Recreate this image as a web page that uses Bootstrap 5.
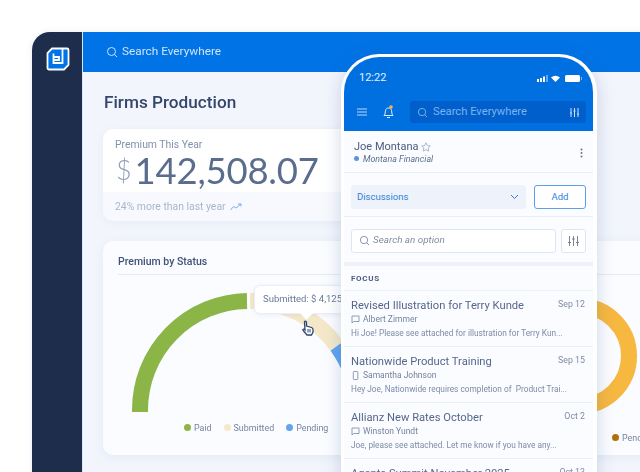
<!DOCTYPE html>
<html lang="en">
<head>
<meta charset="utf-8">
<title>Firms Production</title>
<link href="https://cdn.jsdelivr.net/npm/bootstrap@5.3.0/dist/css/bootstrap.min.css" rel="stylesheet">
<style>
html,body{height:100%;}
body{background:#fff;font-family:Roboto,"Noto Sans",sans-serif;overflow:hidden;color:#3d4f70;}
.stage{position:relative;width:640px;height:472px;overflow:hidden;padding:32px 0 0 32px;filter:blur(.3px);}
.desk{width:640px;height:460px;border-top-left-radius:18px;overflow:hidden;box-shadow:0 0 6px rgba(60,90,150,.10);background:#f2f5fc;}
.rail{width:51px;background:#1e2d4b;padding:14px 0 0 14px;border-right:1px solid #dfe6f3;}
.mainarea{width:557px;}
.topbar{height:40px;background:#0073e6;color:#cfe3fb;padding-left:23px;font-size:11.8px;gap:4px;}
.pagebody{padding:18px 20px 0 21px;}
.pagetitle{font-size:17.2px;font-weight:500;color:#33466b;line-height:24px;margin:0 0 15px;}
.kpi{width:300px;height:92px;margin-left:-1px;background:#fff;border-radius:10px;box-shadow:0 2px 8px rgba(70,100,160,.06);overflow:hidden;}
.kpihead{height:63px;padding:9px 12px 0;}
.kpilabel{font-size:10.4px;line-height:13px;color:#8291ac;}
.kpinum{color:#5a6d8d;font-size:36.5px;line-height:38px;letter-spacing:-.2px;font-family:Lato,"Noto Sans",sans-serif;}
.kpicur{color:#8f9db6;font-size:27px;margin:0 3px 0 1px;vertical-align:4px;font-weight:300;}
.kpifoot{height:29px;background:#f8f9fe;color:#a9b5cb;font-size:10.4px;padding:0 12px;gap:4px;}
.panel{position:relative;width:560px;height:214px;margin-top:20px;margin-left:-1px;background:#fbfcff;border-radius:10px;box-shadow:0 2px 10px rgba(70,100,160,.08);padding:14px 15px;}
.paneltitle{font-size:10.5px;font-weight:500;color:#3f5277;line-height:14px;padding-bottom:5px;border-bottom:1px solid #e6ebf5;}
.gauge{position:absolute;left:0;top:0;}
.legendrow{position:absolute;left:81px;top:181px;font-size:8.9px;color:#75859f;gap:12px;}
.legendfar{position:absolute;left:509px;top:191px;font-size:8.9px;color:#75859f;}
.swatch{display:inline-block;width:7px;height:7px;border-radius:50%;margin-right:3px;}
.tipbox{position:absolute;left:151px;top:44px;height:29px;width:110px;background:#fff;border:1px solid #e9eef7;border-radius:6px;font-size:9.5px;color:#67799a;padding-left:8px;white-space:nowrap;overflow:visible;box-shadow:0 1px 4px rgba(70,100,160,.1);}
.tipbox::after{content:"";position:absolute;left:47px;bottom:-5px;width:9px;height:9px;background:#fff;transform:rotate(45deg);}
.handicon{position:absolute;left:198px;top:79px;}
.phone{position:absolute;left:341px;top:54px;width:256px;height:440px;border:3px solid #fff;border-right-width:4px;border-radius:38px 38px 0 0;background:#fbfcff;overflow:hidden;box-shadow:0 4px 18px rgba(50,80,140,.22);}
.phonehead{height:74px;background:#0070e0;color:#e3effd;padding:0 7px 0 13px;}
.statusline{height:44px;padding:13px 0 0 2px;font-size:11px;margin-right:3px;}
.searchpill{flex:1;height:22px;background:#005fca;border-radius:3px;margin-left:16px;padding:0 7px;color:#7db3f0;font-size:11.2px;gap:5px;}
.contact{height:42px;padding:9px 10px 0;border-bottom:1px solid #e9eef7;}
.contactname{font-size:11px;line-height:14px;color:#4a5c7c;}
.contactsub{font-size:8.8px;line-height:11px;font-style:italic;color:#5d6e8d;}
.bluedot{display:inline-block;width:5px;height:5px;background:#5f93d8;border-radius:50%;margin-right:4px;vertical-align:1px;}
.pickrow{height:44px;padding:5px 7px 0;border-bottom:1px solid #e9eef7;gap:8px;}
.picker{flex:1;height:24px;background:#eef2fa;border-radius:3px;color:#2f7fdc;font-size:9.5px;padding:0 7px 0 6px;}
.addbtn{width:52px;height:24px;padding:0;font-size:9.5px;color:#2f7fdc;border:1px solid #5d9fe8;background:#fff;border-radius:3px;}
.searchrow{height:49px;padding:2px 7px 0;gap:5px;border-bottom:4px solid #eef2f8;}
.optbox{flex:1;height:24px;border:1px solid #dfe6f2;border-radius:3px;background:#fff;color:#7f8ca5;font-size:9.9px;font-style:italic;padding:0 7px;gap:3px;}
.slidebtn{width:25px;height:24px;border:1px solid #dfe6f2;border-radius:3px;background:#fff;}
.focushead{height:25px;padding:2px 7px 0;font-size:8px;font-weight:700;letter-spacing:.7px;color:#4a5c7c;border-bottom:1px solid #edf1f8;}
.msg{height:56px;padding:8px 8px 0 7px;border-bottom:1px solid #e9eef7;}
.msgtitle{font-size:11.2px;line-height:14px;color:#55678a;white-space:nowrap;}
.msgdate{font-size:8.8px;color:#7d8ca6;line-height:11px;margin-left:auto;white-space:nowrap;}
.msgperson{font-size:8.5px;line-height:13px;color:#75859f;gap:3px;}
.msgbody{font-size:8.3px;line-height:14px;color:#7d8ca6;white-space:nowrap;}
</style>
</head>
<body>
<div class="stage">
  <div class="desk d-flex">
    <div class="rail flex-shrink-0">
      <svg width="24" height="24" viewBox="0 0 24 24"><path d="M6 1.500H21a1.500 1.500 0 0 1 1.500 1.500V18L18 22.500H3A1.500 1.500 0 0 1 1.500 21V6Z" fill="#0073e6" stroke="#fff" stroke-width="1.800"/><path d="M16.500 2v14H7.500V6.500M7.500 10H13v3H7.500" fill="none" stroke="#fff" stroke-width="1.800"/></svg>
    </div>
    <div class="mainarea flex-shrink-0">
      <div class="topbar d-flex align-items-center">
        <svg width="12" height="12" viewBox="0 0 12 12" fill="none" stroke="#cfe3fb" stroke-width="1"><circle cx="5.500" cy="5.500" r="4"/><path d="M8.500 8.500 11 11"/></svg>
        <span>Search Everywhere</span>
      </div>
      <div class="pagebody">
        <h1 class="pagetitle">Firms Production</h1>
        <div class="kpi">
          <div class="kpihead">
            <div class="kpilabel">Premium This Year</div>
            <div class="kpinum text-nowrap"><span class="kpicur">$</span>142,508.07</div>
          </div>
          <div class="kpifoot d-flex align-items-center">
            <span>24% more than last year</span>
            <svg width="12" height="8" viewBox="0 0 12 8" fill="none" stroke="#6fa5ea" stroke-width=".9"><path d="M.5 7 3.500 3.500 6 5 11 1M8 1h3v2.500"/></svg>
          </div>
        </div>
        <div class="panel">
          <div class="paneltitle">Premium by Status</div>
          <svg class="gauge" width="560" height="214" viewBox="0 0 560 214" fill="none">
            <path d="M37 171V169A109 109 0 0 1 144 60" stroke="#8cb548" stroke-width="16"/>
            <path d="M147 60A109 109 0 0 1 234 105" stroke="#f5e8ca" stroke-width="16"/>
            <path d="M234 105A109 109 0 0 1 255 169" stroke="#61a4ef" stroke-width="16"/>
            <circle cx="476" cy="115" r="50" stroke="#f7b840" stroke-width="16"/>
          </svg>
          <div class="tipbox d-flex align-items-center">Submitted: $ 4,125.00</div>
          <svg class="handicon" width="14" height="16" viewBox="0 0 14 16"><path d="M3.500 1.500c1-.8 2 0 2 1V6l5 1.500c1 .4 1.500 1 1.500 2V12l-1.500 3H6L2 10.500c-.5-1 .5-1.800 1.500-1L4 10Z" fill="#fff" stroke="#2b4670" stroke-width="1.300"/><path d="M7 9v3.500M9 9v3.500" stroke="#2b4670"/></svg>
          <div class="legendrow d-flex">
            <span><span class="swatch" style="background:#8cb548"></span>Paid</span>
            <span><span class="swatch" style="background:#f5e8ca"></span>Submitted</span>
            <span><span class="swatch" style="background:#61a4ef"></span>Pending</span>
          </div>
          <div class="legendfar"><span class="swatch" style="background:#b26f0c"></span>Pending</div>
        </div>
      </div>
    </div>
  </div>
  <div class="phone">
    <div class="phonehead">
      <div class="statusline d-flex align-items-start justify-content-between">
        <span>12:22</span>
        <svg class="mt-1" width="46" height="9" viewBox="0 0 46 9" fill="#fff"><rect x="0" y="5" width="2" height="3"/><rect x="3" y="4" width="2" height="4"/><rect x="6" y="2.500" width="2" height="5.500"/><rect x="9" y="1" width="2" height="7" opacity=".4"/><path d="M14 3.500a7.500 7.500 0 0 1 9 0L18.500 8Z"/><rect x="28" y="1" width="15" height="7" rx="1.500"/><rect x="44" y="3" width="1" height="3" opacity=".5"/></svg>
      </div>
      <div class="d-flex align-items-center">
        <svg width="10" height="8" viewBox="0 0 10 8" stroke="#bcd7f7" stroke-width="1"><path d="M0 1h10M0 4h10M0 7h10"/></svg>
        <svg class="ms-3" width="11" height="14" viewBox="0 0 11 14" fill="none"><path d="M1 10.500c1.500-1.500 1-3 1.500-5C3 3.500 4 3 5.500 3S8 3.500 8.500 5.500c.5 2 0 3.500 1.500 5Zm3 2h3" stroke="#e3effd"/><circle cx="8" cy="2" r="1.800" fill="#f7b840"/></svg>
        <div class="searchpill d-flex align-items-center">
          <svg width="11" height="11" viewBox="0 0 12 12" fill="none" stroke="#7db3f0"><circle cx="5.500" cy="5.500" r="4"/><path d="M8.500 8.500 11 11"/></svg>
          <span>Search Everywhere</span>
          <svg class="ms-auto" width="9" height="9" viewBox="0 0 9 9" stroke="#cfe3fb"><path d="M1 0v9M4.500 0v9M8 0v9M0 5h2M3.500 3h2M7 6h2"/></svg>
        </div>
      </div>
    </div>
    <div class="contact d-flex justify-content-between">
      <div>
        <div class="contactname">Joe Montana <svg width="10" height="10" viewBox="0 0 10 10" fill="none" stroke="#8c9ab2" stroke-width=".7"><path d="m5 .8 1.300 2.800 3 .4-2.200 2.100.6 3L5 7.600 2.300 9.100l.6-3L.7 4l3-.4Z"/></svg></div>
        <div class="contactsub"><span class="bluedot"></span>Montana Financial</div>
      </div>
      <svg class="mt-2" width="3" height="10" viewBox="0 0 3 10" fill="#65768f"><circle cx="1.500" cy="1.500" r="1"/><circle cx="1.500" cy="5" r="1"/><circle cx="1.500" cy="8.500" r="1"/></svg>
    </div>
    <div class="pickrow d-flex align-items-center">
      <div class="picker d-flex align-items-center justify-content-between">
        <span>Discussions</span>
        <svg width="9" height="6" viewBox="0 0 9 6" fill="none" stroke="#2f7fdc"><path d="m1 1 3.500 3.500L8 1"/></svg>
      </div>
      <button type="button" class="btn addbtn">Add</button>
    </div>
    <div class="searchrow d-flex align-items-center">
      <div class="optbox d-flex align-items-center">
        <svg width="11" height="11" viewBox="0 0 12 12" fill="none" stroke="#7f8ca5"><circle cx="5.500" cy="5.500" r="4"/><path d="M8.500 8.500 11 11"/></svg>
        <span>Search an option</span>
      </div>
      <div class="slidebtn d-flex align-items-center justify-content-center">
        <svg width="11" height="10" viewBox="0 0 11 10" stroke="#75859f"><path d="M1.500 0v10M5.500 0v10M9.500 0v10M0 6.500h3M4 3h3M8 6.500h3"/></svg>
      </div>
    </div>
    <div class="focushead d-flex align-items-center">FOCUS</div>
    <div class="msg">
      <div class="d-flex"><span class="msgtitle">Revised Illustration for Terry Kunde</span><span class="msgdate">Sep 12</span></div>
      <div class="msgperson d-flex align-items-center"><svg width="9" height="9" viewBox="0 0 9 9" fill="none" stroke="#75859f" stroke-width=".8"><path d="M1 1h7v5.500H2.500L1 8Z"/></svg><span>Albert Zimmer</span></div>
      <div class="msgbody">Hi Joe! Please see attached for illustration for Terry Kun...</div>
    </div>
    <div class="msg">
      <div class="d-flex"><span class="msgtitle">Nationwide Product Training</span><span class="msgdate">Sep 15</span></div>
      <div class="msgperson d-flex align-items-center"><svg width="9" height="9" viewBox="0 0 9 9" fill="none" stroke="#75859f" stroke-width=".8"><rect x="2.300" y=".5" width="4.500" height="8" rx=".8"/></svg><span>Samantha Johnson</span></div>
      <div class="msgbody">Hey Joe, Nationwide requires completion of&nbsp; Product Trai...</div>
    </div>
    <div class="msg">
      <div class="d-flex"><span class="msgtitle">Allianz New Rates October</span><span class="msgdate">Oct 2</span></div>
      <div class="msgperson d-flex align-items-center"><svg width="9" height="9" viewBox="0 0 9 9" fill="none" stroke="#75859f" stroke-width=".8"><path d="M1 1h7v5.500H2.500L1 8Z"/></svg><span>Winston Yundt</span></div>
      <div class="msgbody">Joe, please see attached. Let me know if you have any...</div>
    </div>
    <div class="msg">
      <div class="d-flex"><span class="msgtitle">Agents Summit November 2025</span><span class="msgdate">Oct 13</span></div>
    </div>
  </div>
</div>
<script src="https://cdn.jsdelivr.net/npm/bootstrap@5.3.0/dist/js/bootstrap.bundle.min.js"></script>
</body>
</html>
